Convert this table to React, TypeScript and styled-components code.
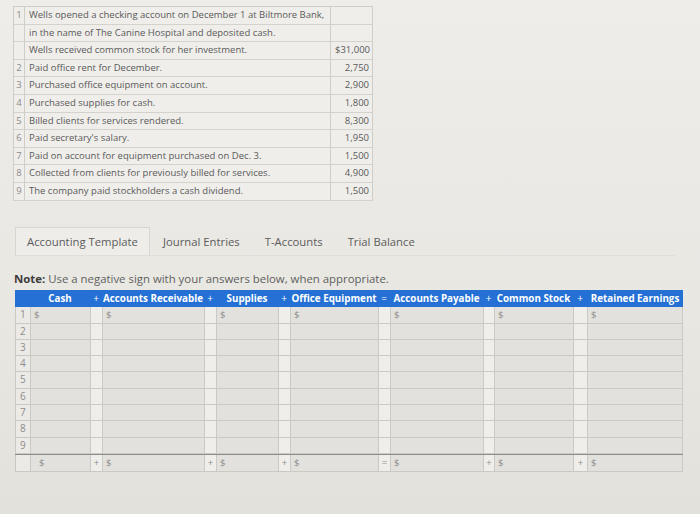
import React from "react";
import styled, { createGlobalStyle } from "styled-components";

const GlobalStyle = createGlobalStyle`
  html, body {
    margin: 0;
    padding: 0;
    background: #e9e8e4;
  }
  body {
    font-family: "Open Sans", "Liberation Sans", sans-serif;
    color: #5b5b5b;
  }
`;

const Page = styled.div`
  width: 700px;
  height: 514px;
  overflow: hidden;
  box-sizing: border-box;
  padding: 6px 0 0 13px;
  background: linear-gradient(180deg, #eeede9 0%, #e8e7e2 60%, #e2e1dc 100%);
`;

// transactions list
const Transactions = styled.div`
  display: grid;
  grid-template-columns: 11px 306px 42px;
  width: 359px;
  border-top: 1px solid #cfcdc8;
  border-left: 1px solid #cfcdc8;
  font-size: 9.5px;
`;

const TCell = styled.div<{ $right?: boolean; $num?: boolean }>`
  height: 16.6px;
  line-height: 16.6px;
  border-right: 1px solid #cfcdc8;
  border-bottom: 1px solid #d4d2cd;
  background: #efeeea;
  padding: ${(p) => (p.$num ? "0" : "0 3px 0 4px")};
  text-align: ${(p) => (p.$right ? "right" : p.$num ? "center" : "left")};
  color: ${(p) => (p.$num ? "#8a8a8a" : "#5a5a5a")};
  white-space: nowrap;
  overflow: hidden;
`;

const Tabs = styled.div`
  display: flex;
  margin-top: 26px;
  margin-left: 2px;
  height: 28px;
  border-bottom: 1px solid #e0ded9;
  width: 660px;
`;

const Tab = styled.div<{ $active?: boolean }>`
  padding: 0 11px;
  line-height: 27px;
  font-size: 11.3px;
  color: #5c5c5c;
  background: ${(p) => (p.$active ? "#eeede9" : "transparent")};
  border: 1px solid ${(p) => (p.$active ? "#d8d6d1" : "transparent")};
  border-bottom: none;
  margin-right: ${(p) => (p.$active ? "1px" : "1px")};
`;

const Note = styled.div`
  margin: 15px 0 0 1px;
  font-size: 11.4px;
  color: #5f5f5f;
  b {
    color: #3c3c3c;
    font-weight: 700;
  }
`;

const COLS = "15px 60px 12px 102px 12px 62px 12px 88px 12px 93px 11px 79px 14px 96px";

const Ledger = styled.div`
  margin: 4px 0 0 2px;
  width: 668px;
`;

const HeaderRow = styled.div`
  display: grid;
  grid-template-columns: ${COLS};
  height: 17px;
  background: #2470d4;
  color: #ffffff;
  line-height: 17px;
`;

const HeadCell = styled.div<{ $op?: boolean }>`
  text-align: center;
  white-space: nowrap;
  font-weight: ${(p) => (p.$op ? 400 : 700)};
  font-size: ${(p) => (p.$op ? "10px" : "9.8px")};
`;

const Row = styled.div<{ $h: number; $total?: boolean }>`
  display: grid;
  grid-template-columns: ${COLS};
  height: ${(p) => p.$h}px;
  border-top: ${(p) => (p.$total ? "1px solid #8f8d89" : "none")};
`;

const Cell = styled.div<{ $kind: "num" | "val" | "op" }>`
  box-sizing: border-box;
  border-left: 1px solid #cbc9c4;
  border-bottom: 1px solid #cbc9c4;
  background: ${(p) =>
    p.$kind === "val" ? "#e2e1dd" : p.$kind === "op" ? "#efeeea" : "#eceae6"};
  font-size: 9.5px;
  color: #8d8d8d;
  line-height: 15px;
  padding-left: ${(p) => (p.$kind === "val" ? "3px" : "0")};
  text-align: ${(p) => (p.$kind === "val" ? "left" : "center")};
  &:last-child {
    border-right: 1px solid #cbc9c4;
  }
`;

const NumCell = styled(Cell)`
  font-size: 10px;
  text-align: left;
  padding-left: 4px;
`;

const transactions: [string, string, string][] = [
  ["1", "Wells opened a checking account on December 1 at Biltmore Bank,", ""],
  ["", "in the name of The Canine Hospital and deposited cash.", ""],
  ["", "Wells received common stock for her investment.", "$31,000"],
  ["2", "Paid office rent for December.", "2,750"],
  ["3", "Purchased office equipment on account.", "2,900"],
  ["4", "Purchased supplies for cash.", "1,800"],
  ["5", "Billed clients for services rendered.", "8,300"],
  ["6", "Paid secretary's salary.", "1,950"],
  ["7", "Paid on account for equipment purchased on Dec. 3.", "1,500"],
  ["8", "Collected from clients for previously billed for services.", "4,900"],
  ["9", "The company paid stockholders a cash dividend.", "1,500"],
];

const heads = [
  "",
  "Cash",
  "+",
  "Accounts Receivable",
  "+",
  "Supplies",
  "+",
  "Office Equipment",
  "=",
  "Accounts Payable",
  "+",
  "Common Stock",
  "+",
  "Retained Earnings",
];

const totalOps = ["+", "+", "+", "=", "+", "+"];

export default function App() {
  const renderRow = (n: number) => {
    const first = n === 1;
    return (
      <Row key={n} $h={first ? 17 : 16.3}>
        <NumCell $kind="num">{n}</NumCell>
        {heads.slice(1).map((h, i) => {
          const isOp = i % 2 === 1;
          return (
            <Cell key={i} $kind={isOp ? "op" : "val"}>
              {!isOp && first ? "$" : ""}
            </Cell>
          );
        })}
      </Row>
    );
  };

  return (
    <>
      <GlobalStyle />
      <Page>
        <Transactions>
          {transactions.map(([n, d, a], i) => (
            <React.Fragment key={i}>
              <TCell $num>{n}</TCell>
              <TCell>{d}</TCell>
              <TCell $right>{a}</TCell>
            </React.Fragment>
          ))}
        </Transactions>

        <Tabs>
          <Tab $active>Accounting Template</Tab>
          <Tab>Journal Entries</Tab>
          <Tab>T-Accounts</Tab>
          <Tab>Trial Balance</Tab>
        </Tabs>

        <Note>
          <b>Note:</b> Use a negative sign with your answers below, when appropriate.
        </Note>

        <Ledger>
          <HeaderRow>
            {heads.map((h, i) => (
              <HeadCell key={i} $op={i > 0 && i % 2 === 0}>
                {h}
              </HeadCell>
            ))}
          </HeaderRow>
          {[1, 2, 3, 4, 5, 6, 7, 8, 9].map(renderRow)}
          <Row $h={17} $total>
            <NumCell $kind="num" />
            {heads.slice(1).map((h, i) => {
              const isOp = i % 2 === 1;
              return (
                <Cell key={i} $kind={isOp ? "op" : "val"}>
                  {isOp ? totalOps[(i - 1) / 2] : i === 0 ? "\u00a0\u00a0$" : "$"}
                </Cell>
              );
            })}
          </Row>
        </Ledger>
      </Page>
    </>
  );
}
